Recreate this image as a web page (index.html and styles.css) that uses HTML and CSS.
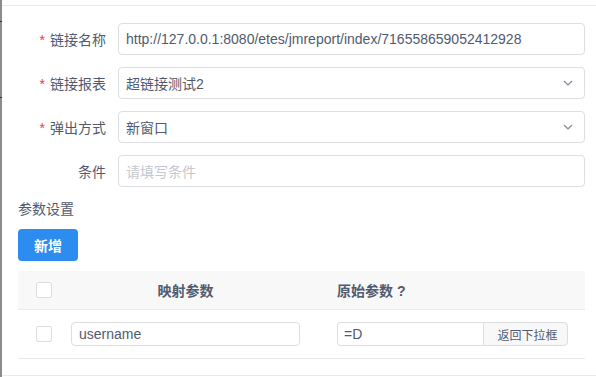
FILE: index.html
```html
<!DOCTYPE html>
<html lang="zh-CN">
<head>
<meta charset="utf-8">
<title>链接设置</title>
<link rel="stylesheet" href="styles.css">
</head>
<body>
<div class="page">
  <div class="edge">
    <span class="tick t1"></span>
    <span class="tick t2"></span>
  </div>
  <div class="main">
    <div class="topbar"></div>
    <div class="content">
      <div class="form-item">
        <label class="label"><span class="req">*</span>链接名称</label>
        <div class="input">http://127.0.0.1:8080/etes/jmreport/index/716558659052412928</div>
      </div>
      <div class="form-item">
        <label class="label"><span class="req">*</span>链接报表</label>
        <div class="input select">
          <span>超链接测试2</span>
          <svg class="arrow" width="10" height="6" viewBox="0 0 10 6"><polyline points="1,1 5,5 9,1" fill="none" stroke="#808695" stroke-width="1.2"/></svg>
        </div>
      </div>
      <div class="form-item">
        <label class="label"><span class="req">*</span>弹出方式</label>
        <div class="input select">
          <span>新窗口</span>
          <svg class="arrow" width="10" height="6" viewBox="0 0 10 6"><polyline points="1,1 5,5 9,1" fill="none" stroke="#808695" stroke-width="1.2"/></svg>
        </div>
      </div>
      <div class="form-item">
        <label class="label">条件</label>
        <div class="input placeholder">请填写条件</div>
      </div>
      <div class="section-title">参数设置</div>
      <button class="btn-primary">新增</button>
      <div class="table">
        <div class="tr thead">
          <div class="td c1"><span class="checkbox"></span></div>
          <div class="td c2 center">映射参数</div>
          <div class="td c3">原始参数 ?</div>
        </div>
        <div class="tr tbody">
          <div class="td c1"><span class="checkbox"></span></div>
          <div class="td c2"><div class="small-input">username</div></div>
          <div class="td c3">
            <div class="group">
              <div class="small-input grp-input">=D</div>
              <div class="addon">返回下拉框</div>
            </div>
          </div>
        </div>
      </div>
    </div>
    <div class="footer"></div>
  </div>
</div>
</body>
</html>
```
FILE: styles.css
```css
* { box-sizing: border-box; }
html, body {
  margin: 0;
  padding: 0;
  background: #fff;
}
body {
  font-family: "Liberation Sans", "Noto Sans CJK SC", sans-serif;
  font-size: 14px;
  color: #515a6e;
}
.page {
  display: flex;
  width: 596px;
  height: 377px;
  overflow: hidden;
}
.edge {
  width: 2px;
  flex: none;
  background: #8c8c8c;
  position: relative;
}
.tick {
  position: absolute;
  left: 0;
  width: 2px;
  height: 1px;
  background: #333;
}
.t1 { top: 21px; }
.t2 { top: 97px; }
.main {
  flex: 1;
  display: flex;
  flex-direction: column;
}
.topbar {
  height: 6px;
  border-bottom: 1px solid #e8eaec;
}
.content {
  padding: 17px 11px 0 16px;
}
.form-item {
  display: flex;
  align-items: center;
  height: 32px;
  margin-bottom: 12px;
}
.label {
  width: 100px;
  flex: none;
  padding-right: 12px;
  text-align: right;
  color: #515a6e;
}
.req {
  color: #ed4014;
  margin-right: 5px;
  font-family: "Liberation Sans", sans-serif;
}
.input {
  flex: 1;
  height: 32px;
  border: 1px solid #dcdee2;
  border-radius: 4px;
  padding: 0 7px;
  display: flex;
  align-items: center;
  color: #515a6e;
  white-space: nowrap;
  overflow: hidden;
}
.select {
  justify-content: space-between;
  padding-right: 11px;
}
.arrow { flex: none; }
.placeholder { color: #c5c8ce; }
.section-title {
  height: 20px;
  line-height: 20px;
  margin-bottom: 10px;
}
.btn-primary {
  display: block;
  width: 60px;
  height: 32px;
  margin: 0 0 10px 0;
  padding: 0;
  border: none;
  border-radius: 4px;
  background: #2d8cf0;
  color: #fff;
  font-family: "Liberation Sans", "Noto Sans CJK SC", sans-serif;
  font-size: 14px;
  font-weight: 700;
}
.tr {
  display: grid;
  grid-template-columns: 53px 266px 1fr;
  align-items: center;
  border-bottom: 1px solid #e8eaec;
}
.thead {
  height: 39px;
  background: #f8f8f9;
  font-weight: 700;
  color: #515a6e;
}
.tbody { height: 49px; }
.td { display: flex; align-items: center; }
.c1 { padding-left: 18px; }
.c2 { padding-right: 37px; }
.center { justify-content: center; }
.checkbox {
  display: block;
  width: 16px;
  height: 16px;
  border: 1px solid #dcdee2;
  border-radius: 2px;
  background: #fff;
}
.small-input {
  width: 100%;
  height: 24px;
  border: 1px solid #dcdee2;
  border-radius: 4px;
  padding: 0 7px;
  display: flex;
  align-items: center;
  color: #515a6e;
}
.group {
  display: flex;
  width: 231px;
}
.grp-input {
  width: 146px;
  flex: none;
  border-radius: 4px 0 0 4px;
  border-right: none;
  padding-left: 6px;
}
.addon {
  flex: 1;
  height: 24px;
  border: 1px solid #dcdee2;
  border-radius: 0 4px 4px 0;
  background: #f8f8f9;
  font-size: 12px;
  display: flex;
  align-items: center;
  justify-content: center;
  padding-left: 4px;
  color: #515a6e;
}
.footer {
  margin-top: 16px;
  border-top: 1px solid #e8eaec;
}
```
